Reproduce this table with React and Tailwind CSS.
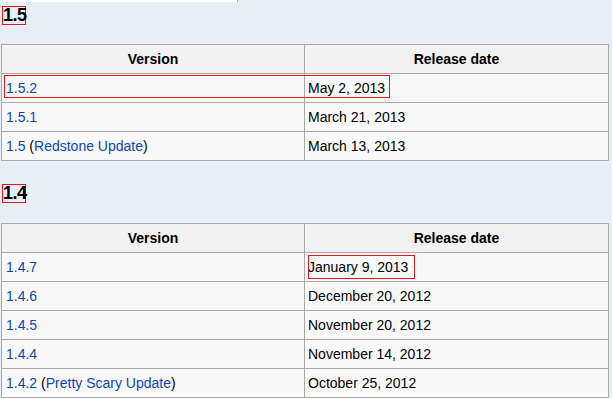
const releases15 = [
  { version: "1.5.2", date: "May 2, 2013" },
  { version: "1.5.1", date: "March 21, 2013" },
  { version: "1.5", name: "Redstone Update", date: "March 13, 2013" },
];

const releases14 = [
  { version: "1.4.7", date: "January 9, 2013" },
  { version: "1.4.6", date: "December 20, 2012" },
  { version: "1.4.5", date: "November 20, 2012" },
  { version: "1.4.4", date: "November 14, 2012" },
  { version: "1.4.2", name: "Pretty Scary Update", date: "October 25, 2012" },
];

function Heading({ children, className = "" }) {
  return (
    <div className={"flex pl-[2px] " + className}>
      <span className="block h-[19px] w-[24px] border border-[#e8141c] text-[18px] font-bold leading-[17px] tracking-[-0.5px] text-black">
        {children}
      </span>
    </div>
  );
}

function VersionTable({ rows, highlight, className = "" }) {
  return (
    <div className={"ml-[1px] w-[608px] border-l border-t border-[#a9a9a9] " + className}>
      {/* header */}
      <div className="grid grid-cols-[303px_304px] bg-[#f2f2f2] text-[14px] font-bold text-black">
        <div className="flex h-[29px] items-center justify-center border-b border-r border-[#a9a9a9]">Version</div>
        <div className="flex h-[29px] items-center justify-center border-b border-r border-[#a9a9a9]">Release date</div>
      </div>
      {rows.map((r, i) => (
        <div key={r.version} className="relative grid grid-cols-[303px_304px] bg-[#f9f9f9] text-[14px] text-black">
          <div className="flex h-[29px] items-center border-b border-r border-[#a9a9a9] pl-[4px]">
            <span className="text-[#0b45b8]">{r.version}</span>
            {r.name && (
              <>
                <span className="whitespace-pre"> (</span>
                <span className="text-[#0b45b8]">{r.name}</span>
                <span>)</span>
              </>
            )}
          </div>
          <div className="flex h-[29px] items-center border-b border-r border-[#a9a9a9] pl-[3px]">{r.date}</div>
          {highlight && highlight.row === i && (
            <div className={"pointer-events-none absolute border border-[#e8141c] " + highlight.box} />
          )}
        </div>
      ))}
    </div>
  );
}

export default function App() {
  return (
    <div className="h-[398px] w-[612px] overflow-hidden bg-[#e7eef6] font-['Liberation_Sans',Arial,sans-serif]">
      {/* edge of the box above */}
      <div className="h-[2px] w-[238px] border-r border-[#a9a9a9] bg-white" />

      <Heading className="mt-[4px]">1.5</Heading>
      <VersionTable
        className="mt-[19px]"
        rows={releases15}
        highlight={{ row: 0, box: "left-[2px] top-[1px] h-[23px] w-[386px]" }}
      />

      <Heading className="mt-[23px]">1.4</Heading>
      <VersionTable
        className="mt-[20px]"
        rows={releases14}
        highlight={{ row: 0, box: "left-[306px] top-[2px] h-[24px] w-[107px]" }}
      />
    </div>
  );
}
